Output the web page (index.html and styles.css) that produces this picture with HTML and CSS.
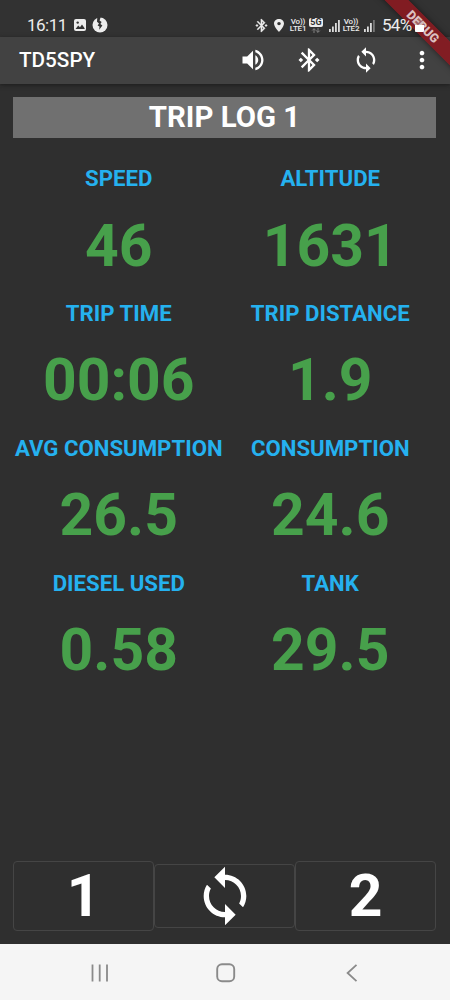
FILE: index.html
```html
<!DOCTYPE html>
<html lang="en">
<head>
<meta charset="utf-8">
<title>TD5SPY</title>
<link rel="stylesheet" href="styles.css">
</head>
<body>
<div class="phone">
  <div class="status">
    <span class="clock">16:11</span>
    <svg class="st-img" viewBox="0 0 12 12" width="12" height="12"><rect width="12" height="12" rx="2" fill="#ececec"/><path d="M1.6 10 4.2 6.4 6 8.2 8 5.6 10.6 9.2V10Z" fill="#323232"/><circle cx="3.7" cy="3.6" r="1.2" fill="#323232"/></svg>
    <svg class="st-fb" viewBox="0 0 16 16" width="16" height="16"><circle cx="8" cy="8" r="7.5" fill="#ececec"/><path d="M5.300 0H8.700L7.600 3.400 9.600 5 8.400 7 10.400 8.400 7.200 12.800 7.500 9.400 5.600 8.500 7 6.600 5 4.800Z" fill="#323232"/></svg>
    <span class="spacer"></span>
    <svg class="st-bt" viewBox="2 1 20 22" width="13" height="15"><path fill="#ececec" stroke="#ececec" stroke-width=".5" d="M7 12l-2-2-2 2 2 2 2-2zm10.710-4.290L12 2h-1v7.590L6.410 5 5 6.410 10.590 12 5 17.590 6.410 19 11 14.410V22h1l5.710-5.710-4.300-4.290 4.300-4.290zM13 5.830l1.880 1.880L13 9.590V5.830zm1.880 10.460L13 18.170v-3.760l1.880 1.880zM19 10l-2 2 2 2 2-2-2-2z"/></svg>
    <svg class="st-pin" viewBox="5 2 14 20" width="10" height="13" preserveAspectRatio="none"><path fill="#ececec" d="M12 2C8.130 2 5 5.130 5 9c0 5.250 7 13 7 13s7-7.750 7-13c0-3.870-3.130-7-7-7zm0 9.500a2.500 2.500 0 0 1 0-5 2.500 2.500 0 0 1 0 5z"/></svg>
    <span class="volte st-v1"><span>Vo))</span><span>LTE1</span></span>
    <span class="net"><span class="g5">5G</span><svg viewBox="0 0 10 5" width="10" height="5"><path d="M3 5V.8M1.200 2.500 3 .7 4.800 2.500M7 0v4.200M5.200 2.600 7 4.400 8.800 2.600" fill="none" stroke="#8a8a8a" stroke-width=".9"/></svg></span>
    <svg class="st-s1" viewBox="0 0 11 13" width="11" height="13"><path d="M0 10h1.800v3H0zM3 7.500h1.800V13H3zM6 4h1.800v9H6zM9 1h1.800v12H9z" fill="#dcdcdc"/></svg>
    <span class="volte st-v2"><span>Vo))</span><span>LTE2</span></span>
    <svg class="st-s2" viewBox="0 0 11 13" width="11" height="13"><path d="M0 10h1.800v3H0zM3 7.500h1.800V13H3zM6 4h1.800v9H6z" fill="#dcdcdc"/><path d="M9 1h1.800v12H9z" fill="#777"/></svg>
    <span class="pct">54%</span>
    <svg class="st-bat" viewBox="0 0 9 13" width="9" height="13"><path d="M3 0h3v1.500h2a1 1 0 0 1 1 1V12a1 1 0 0 1-1 1H1a1 1 0 0 1-1-1V2.500a1 1 0 0 1 1-1h2z" fill="#c8b4b4" fill-opacity=".45"/><path d="M0 6h9v6a1 1 0 0 1-1 1H1a1 1 0 0 1-1-1z" fill="#fff"/></svg>
  </div>
  <header class="appbar">
    <h1 class="app-title">TD5SPY</h1>
    <div class="actions">
      <svg viewBox="0 0 24 24"><path d="M3 9v6h4l5 5V4L7 9H3zm13.500 3c0-1.770-1.020-3.290-2.500-4.030v8.050c1.480-.73 2.500-2.250 2.500-4.020zM14 3.230v2.060c2.890.86 5 3.540 5 6.710s-2.110 5.850-5 6.710v2.060c4.010-.91 7-4.490 7-8.770s-2.990-7.860-7-8.770z"/></svg>
      <svg viewBox="0 0 24 24"><path d="M7 12l-2-2-2 2 2 2 2-2zm10.710-4.290L12 2h-1v7.590L6.410 5 5 6.410 10.590 12 5 17.590 6.410 19 11 14.410V22h1l5.710-5.710-4.300-4.290 4.300-4.290zM13 5.830l1.880 1.880L13 9.590V5.830zm1.880 10.460L13 18.170v-3.760l1.880 1.880zM19 10l-2 2 2 2 2-2-2-2z"/></svg>
      <svg viewBox="0 0 24 24"><path d="M12 4V1L8 5l4 4V6c3.310 0 6 2.690 6 6 0 1.010-.25 1.970-.7 2.800l1.460 1.460C19.540 15.030 20 13.570 20 12c0-4.420-3.580-8-8-8zm0 14c-3.310 0-6-2.690-6-6 0-1.010.25-1.970.7-2.800L5.240 7.740C4.460 8.970 4 10.430 4 12c0 4.420 3.580 8 8 8v3l4-4-4-4v3z"/></svg>
      <svg viewBox="0 0 24 24"><path d="M12 8c1.100 0 2-.9 2-2s-.9-2-2-2-2 .9-2 2 .9 2 2 2zm0 2c-1.100 0-2 .9-2 2s.9 2 2 2 2-.9 2-2-.9-2-2-2zm0 6c-1.100 0-2 .9-2 2s.9 2 2 2 2-.9 2-2-.9-2-2-2z"/></svg>
    </div>
  </header>
  <main class="content">
    <h2 class="trip-title">TRIP LOG 1</h2>
    <div class="grid">
      <div class="cell"><div class="label">SPEED</div><div class="value">46</div></div>
      <div class="cell"><div class="label">ALTITUDE</div><div class="value">1631</div></div>
      <div class="cell"><div class="label">TRIP TIME</div><div class="value">00:06</div></div>
      <div class="cell"><div class="label">TRIP DISTANCE</div><div class="value">1.9</div></div>
      <div class="cell"><div class="label">AVG CONSUMPTION</div><div class="value">26.5</div></div>
      <div class="cell"><div class="label">CONSUMPTION</div><div class="value">24.6</div></div>
      <div class="cell"><div class="label">DIESEL USED</div><div class="value">0.58</div></div>
      <div class="cell"><div class="label">TANK</div><div class="value">29.5</div></div>
    </div>
    <div class="buttons">
      <button class="btn">1</button>
      <button class="btn btn-sync"><svg viewBox="0 0 24 24"><path d="M12 4V1L8 5l4 4V6c3.310 0 6 2.690 6 6 0 1.010-.25 1.970-.7 2.800l1.460 1.460C19.540 15.030 20 13.570 20 12c0-4.420-3.580-8-8-8zm0 14c-3.310 0-6-2.690-6-6 0-1.010.25-1.970.7-2.800L5.240 7.740C4.460 8.970 4 10.430 4 12c0 4.420 3.580 8 8 8v3l4-4-4-4v3z"/></svg></button>
      <button class="btn">2</button>
    </div>
  </main>
  <nav class="navbar">
    <svg viewBox="0 0 18 18" width="18" height="18"><path d="M1.500 .5v17M8.700 .5v17M16 .5v17" stroke="#8a8a8a" stroke-width="1.800" fill="none"/></svg>
    <svg class="home" viewBox="0 0 20 20" width="20" height="20"><rect x="1.200" y="1.200" width="17" height="17" rx="4.800" stroke="#8a8a8a" stroke-width="1.900" fill="none"/></svg>
    <svg viewBox="0 0 12 18" width="12" height="18"><path d="M10.500 .8 1.600 9l8.900 8.200" stroke="#8a8a8a" stroke-width="1.800" fill="none"/></svg>
  </nav>
  <div class="debug">DEBUG</div>
</div>
</body>
</html>
```

FILE: styles.css
```css
* { box-sizing: border-box; }
body { margin: 0; }
.phone {
  position: relative;
  width: 450px;
  height: 1000px;
  overflow: hidden;
  display: flex;
  flex-direction: column;
  background: linear-gradient(#323232 37px, #2f2f2f 37px);
  color: #fff;
  font-family: Roboto, "Liberation Sans", sans-serif;
}

/* Status bar: its items stay above the corner ribbon */
.status {
  position: relative;
  z-index: 2;
  height: 37px;
  padding: 13px 26px 0 27px;
  display: flex;
  align-items: center;
  color: #ececec;
}
.clock { font-size: 17px; line-height: 24px; width: 47px; letter-spacing: -0.5px; }
.st-fb { margin-left: 6px; }
.spacer { flex: 1; }
.st-pin { margin-left: 6px; }
.volte {
  display: flex;
  flex-direction: column;
  align-items: center;
  width: 18px;
  font-size: 8px;
  line-height: 7px;
  font-weight: 500;
  letter-spacing: -0.2px;
}
.st-v1 { margin-left: 5px; }
.net { display: flex; flex-direction: column; align-items: center; margin-left: 2px; gap: 1px; }
.g5 {
  width: 14px;
  height: 9px;
  border-radius: 2px;
  background: #ececec;
  color: #323232;
  font-size: 9px;
  line-height: 9px;
  font-weight: 700;
  text-align: center;
}
.st-s1 { margin-left: 6px; }
.st-v2 { margin-left: 2px; }
.st-s2 { margin-left: 4px; }
.pct { margin-left: 7px; width: 32px; font-size: 17px; line-height: 24px; letter-spacing: -0.7px; }
.st-bat { margin-left: 1px; }

/* App bar */
.appbar {
  height: 47px;
  padding: 0 14px 2px 19px;
  display: flex;
  align-items: center;
  justify-content: space-between;
  background: #424242;
  box-shadow: 0 1px 4px #1c1c1c;
}
.app-title { margin: 0; font-size: 20.700px; font-weight: 500; line-height: 28px; }
.actions { display: flex; gap: 28.400px; }
.actions svg { width: 28px; height: 28px; fill: #fff; }

/* Trip log */
.content { flex: 1; display: flex; flex-direction: column; padding: 13px 14px 13px 13px; }
.trip-title {
  margin: 0;
  height: 41px;
  background: #707070;
  font-size: 29.400px;
  line-height: 40px;
  font-weight: 700;
  text-align: center;
}
.grid { display: grid; grid-template-columns: 1fr 1fr; grid-auto-rows: 134.900px; padding-top: 28px; }
.cell { text-align: center; white-space: nowrap; }
.label { height: 26px; font-size: 22.200px; line-height: 25px; font-weight: 700; color: #25b1ef; }
.value { margin-top: 18.600px; font-size: 58.800px; line-height: 70px; font-weight: 700; color: #47a04b; }

.buttons { margin-top: auto; display: flex; align-items: center; }
.btn {
  flex: 1;
  height: 70px;
  padding: 0;
  display: flex;
  align-items: center;
  justify-content: center;
  background: none;
  border: 1.500px solid #454545;
  border-radius: 4px;
  color: #fff;
  font: 700 58.800px/66px Roboto, "Liberation Sans", sans-serif;
}
.btn-sync { height: 64px; }
.btn-sync svg { width: 64px; height: 64px; fill: #fff; }

/* System navigation */
.navbar {
  height: 56px;
  padding: 2px 92px 0 91px;
  display: flex;
  align-items: center;
  justify-content: space-between;
  background: #f5f5f5;
}
.home { margin-right: 4px; }

/* Corner ribbon */
.debug {
  position: absolute;
  left: 363px;
  top: 18px;
  width: 120px;
  height: 17px;
  transform: rotate(45deg);
  background: rgba(138, 26, 32, 0.9);
  box-shadow: 0 0 6px rgba(0, 0, 0, 0.5);
  color: #dcc0c0;
  font-size: 12.500px;
  line-height: 17px;
  font-weight: 900;
  text-align: center;
}
```
